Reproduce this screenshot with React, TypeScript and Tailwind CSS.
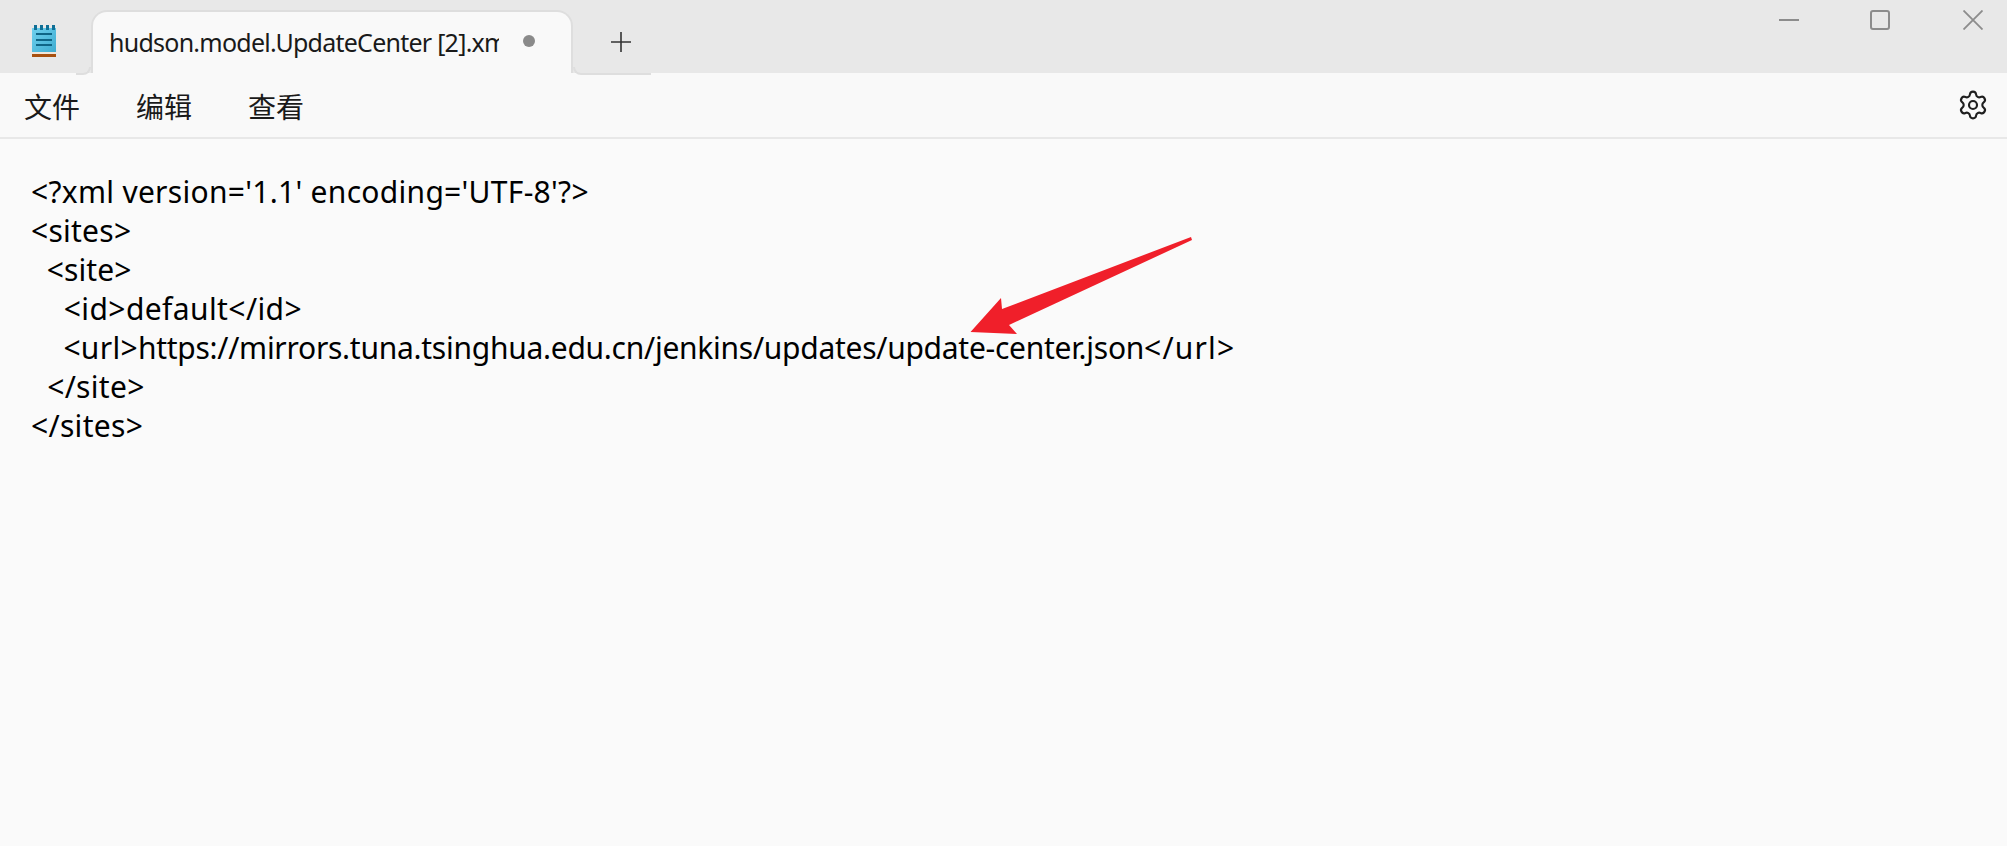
import React from "react";
import { Settings } from "lucide-react";

function NotepadIcon() {
  return (
    <svg width="24" height="32" viewBox="0 0 24 32" className="shrink-0">
      <defs>
        <linearGradient id="np" x1="0" y1="0" x2="1" y2="1">
          <stop offset="0" stopColor="#6fd0ee" />
          <stop offset="1" stopColor="#3facd0" />
        </linearGradient>
      </defs>
      <rect x="0" y="3" width="24" height="24" fill="url(#np)" />
      <rect x="2" y="0" width="3" height="5" fill="#0f6f96" />
      <rect x="8" y="0" width="3" height="5" fill="#0f6f96" />
      <rect x="14" y="0" width="3" height="5" fill="#0f6f96" />
      <rect x="20" y="0" width="3" height="5" fill="#0f6f96" />
      <rect x="4" y="8" width="16" height="2" fill="#0f6586" />
      <rect x="4" y="14" width="16" height="2" fill="#0f6586" />
      <rect x="4" y="19" width="16" height="2" fill="#0f6586" />
      <rect x="0" y="27" width="24" height="2" fill="#f0e6da" />
      <rect x="0" y="29" width="24" height="3" fill="#a8500f" />
    </svg>
  );
}

export default function App() {
  return (
    <div
      className="relative flex h-[846px] w-[2007px] flex-col overflow-hidden bg-[#fafafa] text-[#1a1a1a]"
      style={{ fontFamily: '"Noto Sans", "Noto Sans CJK SC", sans-serif' }}
    >
      {/* Title bar */}
      <div className="flex h-[73px] shrink-0 items-start bg-[#e8e8e8] pl-[32px]">
        <div className="mt-[25px] w-[59px] shrink-0">
          <NotepadIcon />
        </div>
        <div className="relative mt-[10px] flex h-[63px] w-[482px] shrink-0 items-start rounded-t-[16px] border-x-2 border-t-2 border-[#dedede] bg-[#f9f9f9] pl-[16px]">
          <div className="mt-[12px] w-[390px] overflow-hidden whitespace-nowrap text-[25px] leading-[36px] tracking-[-0.75px]">
            hudson.model.UpdateCenter [2].xml
          </div>
          <span className="ml-[24px] mt-[23px] h-[12px] w-[12px] rounded-full bg-[#8a8a8a]" />
          <span className="absolute bottom-[-2px] left-[-17px] h-[8px] w-[15px] rounded-br-[8px] border-b-2 border-r-2 border-[#dedede]" />
          <span className="absolute bottom-[-2px] left-[480px] h-[8px] w-[78px] rounded-bl-[8px] border-b-2 border-l-2 border-[#dedede]" />
        </div>
        <svg width="22" height="22" viewBox="0 0 22 22" className="ml-[37px] mt-[31px] shrink-0" stroke="#333" strokeWidth="1.6">
          <path d="M11 1v20M1 11h20" />
        </svg>
        <div className="ml-auto flex items-start">
          <svg width="20" height="4" viewBox="0 0 20 4" className="mr-[71px] mt-[18px]" stroke="#8c8c8c" strokeWidth="2">
            <path d="M0 2h20" />
          </svg>
          <svg width="20" height="20" viewBox="0 0 20 20" className="mr-[73px] mt-[10px]" fill="none" stroke="#8c8c8c" strokeWidth="2">
            <rect x="1" y="1" width="18" height="18" rx="2" />
          </svg>
          <svg width="20" height="20" viewBox="0 0 20 20" className="mr-[24px] mt-[10px]" fill="none" stroke="#8c8c8c" strokeWidth="1.8">
            <path d="M0.5 0.5l19 19M19.5 0.5l-19 19" />
          </svg>
        </div>
      </div>

      {/* Menu bar */}
      <div className="flex h-[66px] shrink-0 items-center border-b-2 border-[#e8e8e8] bg-[#f9f9f9] pl-[24px] pr-[18px] pt-[2px] text-[28px]" style={{ fontFamily: '"Noto Sans CJK SC", sans-serif' }}>
        <span className="w-[112px]">文件</span>
        <span className="w-[112px]">编辑</span>
        <span>查看</span>
        <Settings className="ml-auto mb-[2px]" size={32} strokeWidth={1.6} color="#1f1f1f" />
      </div>

      {/* Editor */}
      <div className="whitespace-pre pl-[31px] pt-[33px] text-[30px] leading-[39px] text-black">
        <div className="tracking-[0.29px]">{"<?xml version='1.1' encoding='UTF-8'?>"}</div>
        <div className="tracking-[0.25px]">{"<sites>"}</div>
        <div className="tracking-[0.1px]">{"  <site>"}</div>
        <div className="tracking-[0.4px]">{"    <id>default</id>"}</div>
        <div>
          <span className="tracking-[0.3px]">{"    <url>"}</span>
          <span className="tracking-[-0.27px]">https://mirrors.tuna.tsinghua.edu.cn/jenkins/updates/update-center.json</span>
          <span className="tracking-[1.2px]">{"</url>"}</span>
        </div>
        <div className="tracking-[0.3px]">{"  </site>"}</div>
        <div className="tracking-[0.3px]">{"</sites>"}</div>
      </div>

      {/* Annotation arrow */}
      <svg className="absolute left-0 top-0 pointer-events-none" width="2007" height="846" viewBox="0 0 2007 846">
        <path d="M970.5 332 L1001 298 L1002 309 L1191 237 L1192 240 L1009 325 L1017 334 Z" fill="#f01f2a" />
      </svg>
    </div>
  );
}
